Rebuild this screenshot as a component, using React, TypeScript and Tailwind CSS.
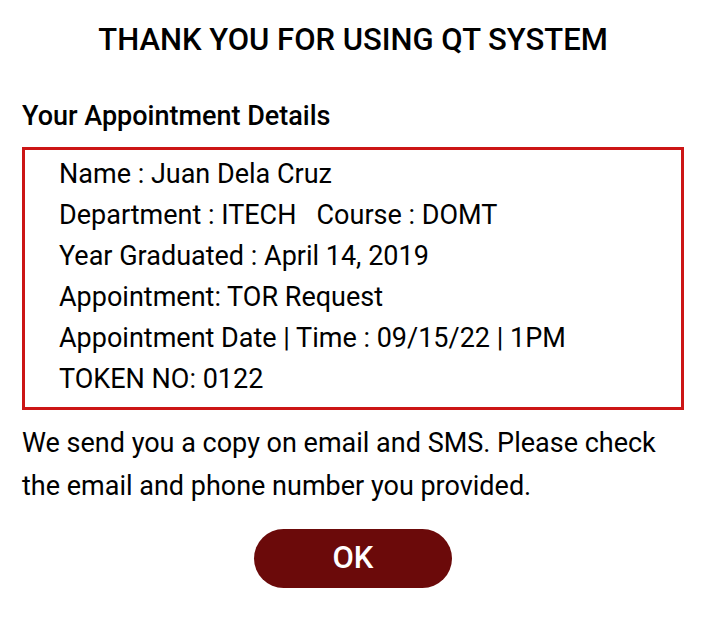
import React from "react";

const DETAILS = [
  "Name : Juan Dela Cruz",
  "Department : ITECH\u00a0\u00a0\u00a0Course : DOMT",
  "Year Graduated : April 14, 2019",
  "Appointment: TOR Request",
  "Appointment Date | Time : 09/15/22 | 1PM",
  "TOKEN NO: 0122",
];

export default function App() {
  return (
    <div
      className="w-[706px] h-[636px] bg-white text-black px-[22px]"
      style={{ fontFamily: "Roboto, 'Noto Sans', sans-serif" }}
    >
      {/* TITLE */}
      <h1 className="pt-[22px] text-center text-[31px] leading-[36px] font-medium">
        THANK YOU FOR USING QT SYSTEM
      </h1>

      {/* DETAILS */}
      <h2 className="mt-[42px] text-[27px] leading-[32px] font-medium">Your Appointment Details</h2>
      <div className="mt-[15px] w-[662px] border-[3px] border-[#cc1616] pl-[34px] pt-[4px] pb-[7px]">
        {DETAILS.map((line) => (
          <p key={line} className="text-[27px] leading-[41px]">
            {line}
          </p>
        ))}
      </div>

      <p className="mt-[12px] text-[27px] leading-[43px]">
        We send you a copy on email and SMS. Please check the email and phone number you provided.
      </p>

      <div className="mt-[21px] flex justify-center">
        <button className="w-[198px] h-[59px] rounded-full bg-[#6b0a0a] text-white text-[31px] font-medium">
          OK
        </button>
      </div>
    </div>
  );
}
